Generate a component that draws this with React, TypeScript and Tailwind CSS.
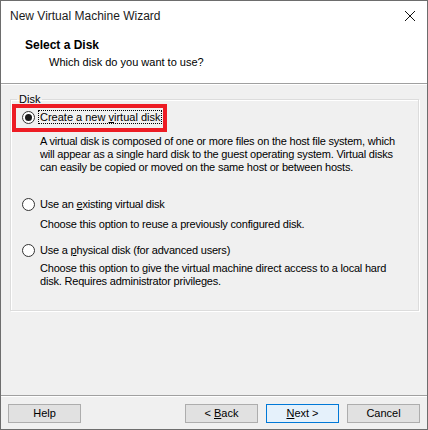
import React from 'react';

const FONT = "font-['Liberation_Sans','DejaVu_Sans',sans-serif]";

function Radio({ checked }: { checked?: boolean }) {
  return (
    <span className="flex h-[13px] w-[13px] shrink-0 items-center justify-center rounded-full border border-[#333333] bg-white">
      {checked && <span className="h-[7px] w-[7px] rounded-full bg-[#1a1a1a]" />}
    </span>
  );
}

function Btn({ children, primary }: { children: React.ReactNode; primary?: boolean }) {
  return (
    <button
      className={
        primary
          ? 'flex h-[19px] w-[73px] items-center justify-center border border-[#0078d7] bg-[#e5f1fb] text-[11px] text-black'
          : 'flex h-[19px] w-[73px] items-center justify-center border border-[#adadad] bg-[#e1e1e1] text-[11px] text-black'
      }
    >
      <span className="whitespace-pre">{children}</span>
    </button>
  );
}

export default function App() {
  return (
    <div className={`${FONT} flex h-[430px] w-[428px] flex-col border border-[#6d6d6d] bg-[#f0f0f0] text-[11px] text-black`}>
      {/* title bar */}
      <div className="flex h-[29px] shrink-0 items-center justify-between bg-white pl-[9px] pr-[9px]">
        <span className="text-[12px] text-[#1b1b1b]">New Virtual Machine Wizard</span>
        <svg width="12" height="12" viewBox="0 0 12 12" className="mr-[2px]">
          <path d="M1 1 L11 11 M11 1 L1 11" stroke="#111" strokeWidth="1" />
        </svg>
      </div>

      {/* header */}
      <div className="h-[54px] shrink-0 border-b border-[#a0a0a0] bg-white pl-[24px] pt-[8px]">
        <div className="text-[12px] font-bold leading-[15px]">Select a Disk</div>
        <div className="mt-[2px] pl-[24px] text-[11px] leading-[14px]">Which disk do you want to use?</div>
      </div>
      <div className="h-px shrink-0 bg-white" />

      {/* body */}
      <div className="relative flex-1 px-[9px] pt-[8px]">
        <fieldset className="h-[218px] border border-[#dcdcdc] px-[10px] shadow-[inset_1px_1px_0_#ffffff,1px_1px_0_#ffffff]">
          <legend className="-ml-[4px] px-[2px] text-[11px] leading-[13px]">Disk</legend>

          <div className="mt-[4px] flex h-[14px] items-center gap-[3px] pl-[1px]">
            <Radio checked />
            <span className="border border-dotted border-black px-px leading-[12px]">
              Create a new <span className="underline">v</span>irtual disk
            </span>
          </div>
          <p className="ml-[19px] mt-[11px] w-[368px] leading-[13px] tracking-[-0.2px]">
            A virtual disk is composed of one or more files on the host file system, which will appear as a single hard disk to the guest operating system. Virtual disks can easily be copied or moved on the same host or between hosts.
          </p>

          <div className="mt-[23px] flex h-[14px] items-center gap-[3px] pl-[1px]">
            <Radio />
            <span className="px-[2px] tracking-[-0.2px]">
              Use an <span className="underline">e</span>xisting virtual disk
            </span>
          </div>
          <p className="ml-[19px] mt-[7px] leading-[13px] tracking-[-0.2px]">Choose this option to reuse a previously configured disk.</p>

          <div className="mt-[12px] flex h-[14px] items-center gap-[3px] pl-[1px]">
            <Radio />
            <span className="px-[2px] tracking-[-0.2px]">
              Use a <span className="underline">p</span>hysical disk (for advanced users)
            </span>
          </div>
          <p className="ml-[19px] mt-[5px] w-[368px] leading-[13px] tracking-[-0.2px]">
            Choose this option to give the virtual machine direct access to a local hard disk. Requires administrator privileges.
          </p>
        </fieldset>

        {/* red highlight annotation */}
        <div className="pointer-events-none absolute left-[11px] top-[19px] h-[28px] w-[155px] border-[4px] border-[#ed1c24]" />
      </div>

      {/* footer */}
      <div className="shrink-0 border-t border-[#a0a0a0]">
        <div className="h-px bg-white" />
        <div className="flex items-center px-[7px] pb-[6px] pt-[7px]">
          <Btn>Help</Btn>
          <div className="flex-1" />
          <div className="flex gap-[8px]">
            <Btn>
              {'< '}
              <span className="underline">B</span>ack
            </Btn>
            <Btn primary>
              <span className="underline">N</span>
              {'ext >'}
            </Btn>
            <Btn>Cancel</Btn>
          </div>
        </div>
      </div>
    </div>
  );
}
